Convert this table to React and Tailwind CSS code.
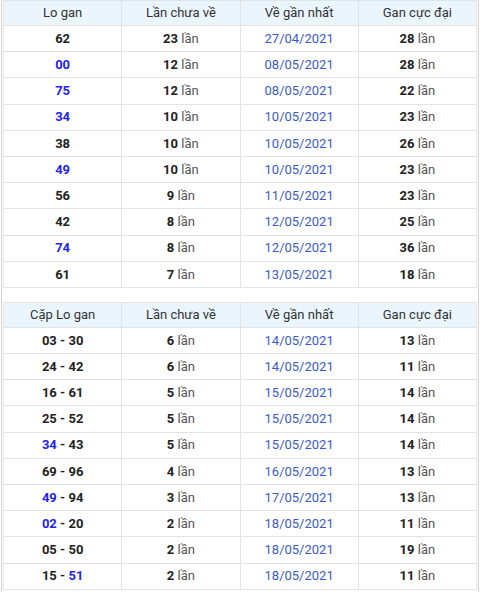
const top = [
  ['62', false, '23', '27/04/2021', '28'],
  ['00', true, '12', '08/05/2021', '28'],
  ['75', true, '12', '08/05/2021', '22'],
  ['34', true, '10', '10/05/2021', '23'],
  ['38', false, '10', '10/05/2021', '26'],
  ['49', true, '10', '10/05/2021', '23'],
  ['56', false, '9', '11/05/2021', '23'],
  ['42', false, '8', '12/05/2021', '25'],
  ['74', true, '8', '12/05/2021', '36'],
  ['61', false, '7', '13/05/2021', '18'],
];

// pairs: [a, aBlue, b, bBlue, times, date, max]
const pairs = [
  ['03', false, '30', false, '6', '14/05/2021', '13'],
  ['24', false, '42', false, '6', '14/05/2021', '11'],
  ['16', false, '61', false, '5', '15/05/2021', '14'],
  ['25', false, '52', false, '5', '15/05/2021', '14'],
  ['34', true, '43', false, '5', '15/05/2021', '14'],
  ['69', false, '96', false, '4', '16/05/2021', '13'],
  ['49', true, '94', false, '3', '17/05/2021', '13'],
  ['02', true, '20', false, '2', '18/05/2021', '11'],
  ['05', false, '50', false, '2', '18/05/2021', '19'],
  ['15', false, '51', true, '2', '18/05/2021', '11'],
];

const th = 'h-[25px] border border-[#e3e3e3] bg-[#eaf5fe] font-normal text-[13px] text-[#333]';
const td = 'h-[26.2px] border border-[#e3e3e3] p-0 text-[13px]';

function Lan({ n }) {
  return (
    <>
      <b className="font-bold text-[#222]">{n}</b> <span className="text-[#555]">lần</span>
    </>
  );
}

function Num({ v, blue }) {
  return <span className={blue ? 'text-[#2323ee]' : 'text-[#222]'}>{v}</span>;
}

function Table({ first, rows, render }) {
  return (
    <table className="w-full table-fixed border-collapse text-center">
      <thead>
        <tr>
          <th className={th}>{first}</th>
          <th className={th}>Lần chưa về</th>
          <th className={th}>Về gần nhất</th>
          <th className={th}>Gan cực đại</th>
        </tr>
      </thead>
      <tbody>{rows.map(render)}</tbody>
    </table>
  );
}

export default function App() {
  return (
    <div
      className="h-[592px] w-[480px] overflow-hidden bg-white"
      style={{ fontFamily: 'Roboto, "Liberation Sans", sans-serif' }}
    >
      <div className="mx-px h-full border-x border-[#d4d4d4] px-[1px]">
        <Table
          first="Lo gan"
          rows={top}
          render={(r, i) => (
            <tr key={i}>
              <td className={td + ' font-bold'}>
                <Num v={r[0]} blue={r[1]} />
              </td>
              <td className={td}>
                <Lan n={r[2]} />
              </td>
              <td className={td + ' text-[#3a5bc9]'}>{r[3]}</td>
              <td className={td}>
                <Lan n={r[4]} />
              </td>
            </tr>
          )}
        />
        <div className="h-[14px]" />
        <Table
          first="Cặp Lo gan"
          rows={pairs}
          render={(r, i) => (
            <tr key={i}>
              <td className={td + ' font-bold'}>
                <Num v={r[0]} blue={r[1]} /> <span className="text-[#222]">-</span> <Num v={r[2]} blue={r[3]} />
              </td>
              <td className={td}>
                <Lan n={r[4]} />
              </td>
              <td className={td + ' text-[#3a5bc9]'}>{r[5]}</td>
              <td className={td}>
                <Lan n={r[6]} />
              </td>
            </tr>
          )}
        />
      </div>
    </div>
  );
}
